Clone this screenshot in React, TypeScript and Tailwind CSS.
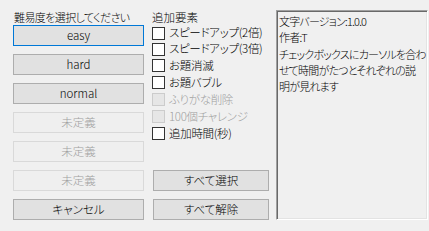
import React from 'react';

const font = "font-['Noto_Sans_CJK_JP',sans-serif] font-light [font-feature-settings:'palt']";

function Btn({ label, focused, disabled }: { label: string; focused?: boolean; disabled?: boolean }) {
  const border = focused ? 'border-[#0078d7]' : disabled ? 'border-[#d9d9d9]' : 'border-[#adadad]';
  const look = disabled ? 'bg-[#efefef] text-[#a0a0a0]' : 'bg-[#e1e1e1] text-black';
  return (
    <div className={`h-[21px] w-full border ${border} ${look} flex items-center justify-center text-[11.5px] font-extralight leading-none`}>
      {label}
    </div>
  );
}

function Check({ label, disabled, h }: { label: string; disabled?: boolean; h: string }) {
  return (
    <div className={`flex items-center ${h}`}>
      <div className={`w-[13px] h-[13px] shrink-0 border ${disabled ? 'border-[#cccccc] bg-[#e6e6e6]' : 'border-[#333333] bg-white'}`} />
      <span className={`ml-[4px] text-[11.5px] leading-none whitespace-nowrap tracking-[-0.3px] ${disabled ? 'text-[#a0a0a0]' : 'text-black'}`}>{label}</span>
    </div>
  );
}

export default function App() {
  const checks = [
    { label: 'スピードアップ(2倍)', h: 'h-[16px]' },
    { label: 'スピードアップ(3倍)', h: 'h-[16px]' },
    { label: 'お題消滅', h: 'h-[17px]' },
    { label: 'お題バブル', h: 'h-[17px]' },
    { label: 'ふりがな削除', h: 'h-[17px]', disabled: true },
    { label: '100個チャレンジ', h: 'h-[17px]', disabled: true },
    { label: '追加時間(秒)', h: 'h-[17px]' },
  ];

  return (
    <div className={`w-[429px] h-[231px] overflow-hidden bg-[#f0f0f0] flex pl-[13px] pt-[9px] ${font}`}>
      <div className="w-[131px] shrink-0 flex flex-col">
        <div className="h-[16px] text-[11px] leading-[16px] pl-[1px] tracking-[-0.6px] whitespace-nowrap">難易度を選択してください</div>
        <div className="flex flex-col gap-[8px]">
          <Btn label="easy" focused />
          <Btn label="hard" />
          <Btn label="normal" />
          <Btn label="未定義" disabled />
          <Btn label="未定義" disabled />
          <Btn label="未定義" disabled />
          <Btn label="キャンセル" />
        </div>
      </div>

      <div className="ml-[8px] w-[118px] shrink-0 flex flex-col">
        <div className="h-[16px] text-[11.5px] leading-[16px]">追加要素</div>
        {checks.map((c, i) => (
          <Check key={i} label={c.label} h={c.h} disabled={c.disabled} />
        ))}
        <div className="mt-[28px] ml-[1px] w-[116px] flex flex-col gap-[8px]">
          <Btn label="すべて選択" />
          <Btn label="すべて解除" />
        </div>
      </div>

      <div className="ml-[6px] mt-[1px] w-[152px] h-[210px] shrink-0 bg-[#f0f0f0] border-t border-l border-[#a0a0a0] border-b-white border-r-white border-b border-r shadow-[inset_1px_1px_0_#696969,inset_-1px_-1px_0_#e3e3e3] pl-[2px] pt-[2px] text-[11px] leading-[16.3px] tracking-[-0.8px] text-black whitespace-nowrap">
        <div>文字バージョン:1.0.0</div>
        <div>作者:T</div>
        <div>チェックボックスにカーソルを合わ</div>
        <div>せて時間がたつとそれぞれの説</div>
        <div>明が見れます</div>
      </div>
    </div>
  );
}
